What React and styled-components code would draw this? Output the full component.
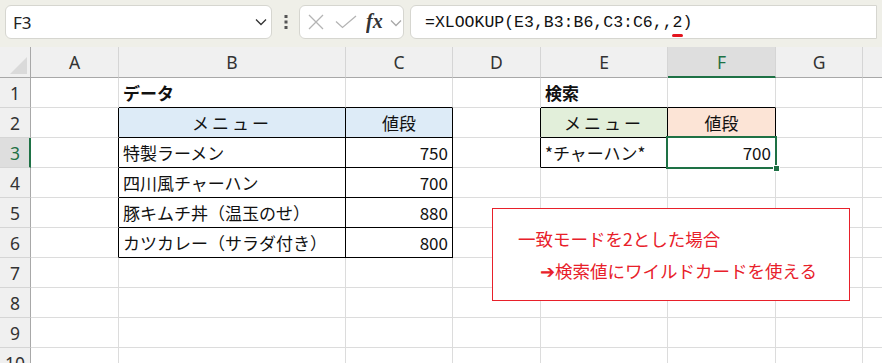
import React from "react";
import styled, { createGlobalStyle } from "styled-components";

const GlobalStyle = createGlobalStyle`
  html, body { margin: 0; padding: 0; background: #ffffff; overflow: hidden; }
  * { box-sizing: border-box; }
`;

const UI_FONT = `"Noto Sans", "Open Sans", "Noto Sans CJK JP", sans-serif`;
const JP_FONT = `"Noto Sans CJK JP", "Noto Sans", sans-serif`;

const Page = styled.div`
  width: 882px;
  height: 363px;
  display: flex;
  flex-direction: column;
  overflow: hidden;
`;

const Toolbar = styled.div`
  flex: 0 0 47px;
  height: 47px;
  background: #efefe8;
  display: flex;
  align-items: flex-start;
  padding: 5px 5px 0 5px;
`;

const Box = styled.div`
  height: 34px;
  background: #ffffff;
  border: 1px solid #d6d6d0;
  border-radius: 6px;
  display: flex;
  align-items: center;
`;

const NameBox = styled(Box)`
  width: 267px;
  padding: 0 4px 0 7px;
  justify-content: space-between;
  font-family: ${UI_FONT};
  font-size: 17px;
  color: #222;
`;

const DotsWrap = styled.div`
  width: 27px;
  height: 34px;
  display: flex;
  align-items: center;
  justify-content: center;
`;

const FxBox = styled(Box)`
  width: 105px;
  padding: 0 0 0 6px;
`;

const FormulaBox = styled(Box)`
  flex: 1;
  margin-left: 6px;
  border-top-right-radius: 0;
  border-bottom-right-radius: 0;
  padding-left: 14px;
  font-family: "Liberation Mono", "DejaVu Sans Mono", monospace;
  font-size: 16.5px;
  color: #111;
  white-space: pre;
`;

const Mark = styled.span`
  position: relative;
  &::after {
    content: "";
    position: absolute;
    left: -1px;
    right: -1px;
    bottom: -5px;
    height: 3px;
    border-radius: 2px;
    background: #e3141e;
  }
`;

const Sheet = styled.div`
  position: relative;
  flex: 1 1 auto;
  min-height: 0;
  overflow: hidden;
  display: grid;
  grid-template-columns: 31px 88px 227px 107px 88px 127px 108px 87px 88px;
  grid-template-rows: 31px;
  grid-auto-rows: 30px;
`;

const Corner = styled.div`
  background: #f0f0f0;
  border-right: 1px solid #a8a8a8;
  border-bottom: 1px solid #a8a8a8;
  display: flex;
  align-items: flex-end;
  justify-content: flex-end;
  padding: 0 3px 3px 0;
`;

const ColHead = styled.div`
  background: ${(p) => (p.$sel ? "#dedede" : "#f0f0f0")};
  border-right: 1px solid #d5d5d5;
  border-bottom: ${(p) => (p.$sel ? "2px solid #1e7145" : "1px solid #a8a8a8")};
  color: ${(p) => (p.$sel ? "#1e7145" : "#333")};
  font-family: ${UI_FONT};
  font-size: 17.5px;
  display: flex;
  align-items: center;
  justify-content: center;
  padding-top: ${(p) => (p.$sel ? "1px" : "0")};
`;

const RowHead = styled.div`
  background: ${(p) => (p.$sel ? "#dedede" : "#f0f0f0")};
  border-right: ${(p) => (p.$sel ? "2px solid #1e7145" : "1px solid #a8a8a8")};
  border-bottom: 1px solid #d5d5d5;
  color: ${(p) => (p.$sel ? "#1e7145" : "#333")};
  font-family: ${UI_FONT};
  font-size: 17.5px;
  display: flex;
  align-items: center;
  justify-content: center;
  padding-left: ${(p) => (p.$sel ? "1px" : "0")};
`;

const Cell = styled.div`
  position: relative;
  background: ${(p) => p.$bg || "#ffffff"};
  border-right: 1px solid ${(p) => (p.$bR ? "#000" : "#dcdcdc")};
  border-bottom: 1px solid ${(p) => (p.$bB ? "#000" : "#dcdcdc")};
  font-family: ${JP_FONT};
  font-size: 17px;
  font-weight: ${(p) => (p.$bold ? 700 : 400)};
  color: #111;
  display: flex;
  align-items: center;
  justify-content: ${(p) =>
    p.$align === "right" ? "flex-end" : p.$align === "center" ? "center" : "flex-start"};
  padding: 0 4px 0 4px;
  white-space: nowrap;
  letter-spacing: ${(p) => (p.$spread ? "0.18em" : "0")};
`;

const Selection = styled.div`
  position: absolute;
  z-index: 3;
  top: -2px;
  left: -2px;
  right: -2px;
  bottom: -2px;
  border: 2px solid #1e7145;
  pointer-events: none;
`;

const Handle = styled.div`
  position: absolute;
  right: -5px;
  bottom: -5px;
  width: 7px;
  height: 7px;
  background: #1e7145;
  border: 1px solid #ffffff;
`;

const Callout = styled.div`
  position: absolute;
  z-index: 4;
  left: 492px;
  top: 161px;
  width: 358px;
  height: 93px;
  border: 1.5px solid #e8202a;
  background: #ffffff;
  color: #e8202a;
  font-family: ${JP_FONT};
  font-size: 17.5px;
  display: flex;
  flex-direction: column;
  padding: 17px 0 0 25px;
  gap: 6px;
  line-height: 26px;
`;

const CalloutLine = styled.div`
  padding-left: ${(p) => p.$indent || 0}px;
`;

const cols = ["A", "B", "C", "D", "E", "F", "G", "H"];

const data = {
  B1: { t: "データ", bold: true },
  B2: { t: "メニュー", align: "center", bg: "#ddebf7", spread: true },
  C2: { t: "値段", align: "center", bg: "#ddebf7" },
  B3: { t: "特製ラーメン" },
  C3: { t: "750", align: "right" },
  B4: { t: "四川風チャーハン" },
  C4: { t: "700", align: "right" },
  B5: { t: "豚キムチ丼（温玉のせ）" },
  C5: { t: "880", align: "right" },
  B6: { t: "カツカレー（サラダ付き）" },
  C6: { t: "800", align: "right" },
  E1: { t: "検索", bold: true },
  E2: { t: "メニュー", align: "center", bg: "#e2efda", spread: true },
  F2: { t: "値段", align: "center", bg: "#fce4d6" },
  E3: { t: "*チャーハン*" },
  F3: { t: "700", align: "right", sel: true },
};

function inRange(c, r, c1, c2, r1, r2) {
  return c >= c1 && c <= c2 && r >= r1 && r <= r2;
}

function edges(ci, r) {
  const tables = [
    [1, 2, 2, 6],
    [4, 5, 2, 3],
  ];
  let bR = false;
  let bB = false;
  for (const [c1, c2, r1, r2] of tables) {
    if (inRange(ci, r, c1, c2, r1, r2)) {
      bR = true;
      bB = true;
    }
    if (ci === c1 - 1 && r >= r1 && r <= r2) bR = true;
    if (r === r1 - 1 && ci >= c1 && ci <= c2) bB = true;
  }
  return { bR, bB };
}

const Chevron = ({ color = "#333", w = 12 }) => (
  <svg width={w} height="8" viewBox="0 0 12 8">
    <path d="M1 1.5 L6 6.5 L11 1.5" fill="none" stroke={color} strokeWidth="1.3" />
  </svg>
);

export default function App() {
  const rows = [1, 2, 3, 4, 5, 6, 7, 8, 9, 10];
  return (
    <Page>
      <GlobalStyle />
      <Toolbar>
        <NameBox>
          <span>F3</span>
          <Chevron />
        </NameBox>
        <DotsWrap>
          <svg width="4" height="14" viewBox="0 0 4 14">
            <rect x="0.5" y="0" width="3" height="3" fill="#555" />
            <rect x="0.5" y="5.5" width="3" height="3" fill="#555" />
            <rect x="0.5" y="11" width="3" height="3" fill="#555" />
          </svg>
        </DotsWrap>
        <FxBox>
          <svg width="18" height="18" viewBox="0 0 18 18" style={{ marginLeft: 1 }}>
            <path d="M2 2 L16 16 M16 2 L2 16" stroke="#b4b4b4" strokeWidth="1.3" fill="none" />
          </svg>
          <svg width="22" height="14" viewBox="0 0 22 14" style={{ marginLeft: 10 }}>
            <path d="M1 6.5 L7.5 12.5 L21 1" stroke="#b4b4b4" strokeWidth="1.3" fill="none" />
          </svg>
          <svg width="22" height="22" viewBox="0 0 22 22" style={{ marginLeft: 9 }}>
            <text
              x="0"
              y="17"
              fontFamily="Liberation Serif, serif"
              fontStyle="italic"
              fontWeight="700"
              fontSize="20"
              fill="#333"
            >
              fx
            </text>
          </svg>
          <span style={{ marginLeft: 2, display: "flex", marginTop: 2 }}>
            <Chevron color="#a8a8a8" w={12} />
          </span>
        </FxBox>
        <FormulaBox>
          =XLOOKUP(E3,B3:B6,C3:C6,,<Mark>2</Mark>)
        </FormulaBox>
      </Toolbar>
      <Sheet>
        <Corner>
          <svg width="17" height="17" viewBox="0 0 17 17">
            <path d="M17 0 L17 17 L0 17 Z" fill="#dadada" />
          </svg>
        </Corner>
        {cols.map((c) => (
          <ColHead key={c} $sel={c === "F"}>
            {c}
          </ColHead>
        ))}
        {rows.map((r) => (
          <React.Fragment key={r}>
            <RowHead $sel={r === 3}>{r}</RowHead>
            {cols.map((c, ci) => {
              const d = data[c + r] || {};
              const e = edges(ci, r);
              return (
                <Cell
                  key={c + r}
                  $bR={e.bR}
                  $bB={e.bB}
                  $bg={d.bg}
                  $align={d.align}
                  $bold={d.bold}
                  $spread={d.spread}
                >
                  {d.t}
                  {d.sel && (
                    <Selection>
                      <Handle />
                    </Selection>
                  )}
                </Cell>
              );
            })}
          </React.Fragment>
        ))}
        <Callout>
          <CalloutLine>一致モードを2とした場合</CalloutLine>
          <CalloutLine $indent={22}>➔検索値にワイルドカードを使える</CalloutLine>
        </Callout>
      </Sheet>
    </Page>
  );
}
